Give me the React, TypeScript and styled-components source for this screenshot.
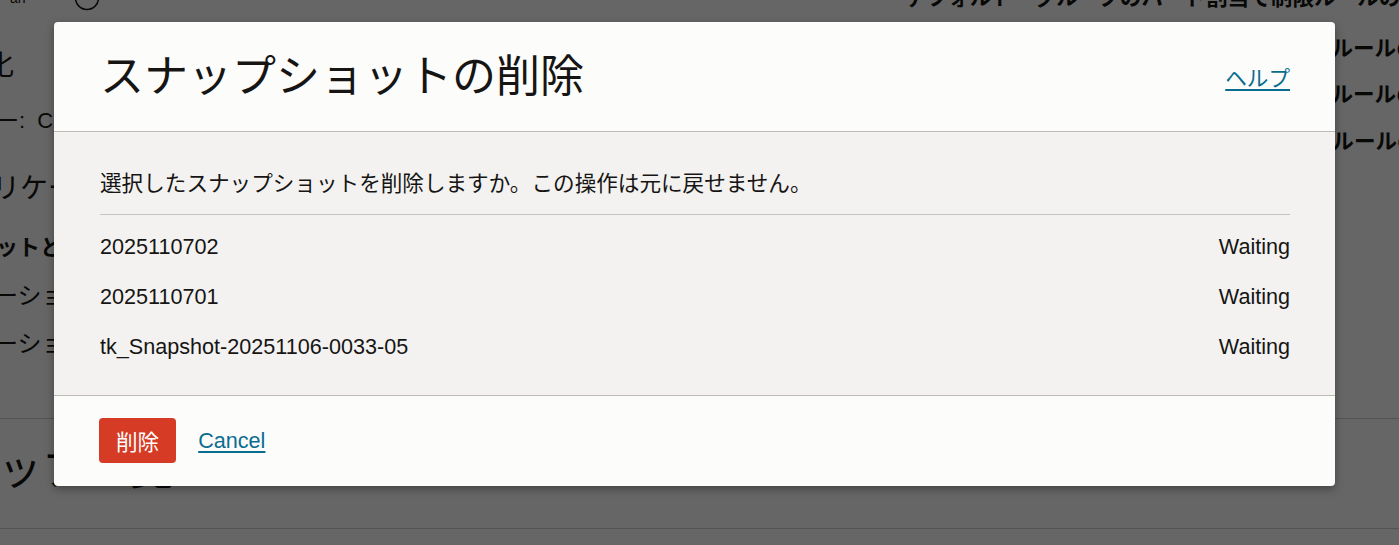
import React from 'react';
import styled, { createGlobalStyle } from 'styled-components';

const GlobalStyle = createGlobalStyle`
  html, body {
    margin: 0;
    padding: 0;
  }
  body {
    font-family: "Liberation Sans", "Noto Sans CJK JP", sans-serif;
    color: #161513;
    background: #ffffff;
  }
`;

const snapshots = [
  { name: '2025110702', status: 'Waiting' },
  { name: '2025110701', status: 'Waiting' },
  { name: 'tk_Snapshot-20251106-0033-05', status: 'Waiting' },
];

const rules = [
  'グループのハード割当て制限ルールの作成',
  'グループのソフト割当て制限ルールの作成',
  'ユーザーのハード割当て制限ルールの作成',
];

// ---- page behind the dialog ----

const Screen = styled.div`
  position: relative;
  width: 100%;
  height: 545px;
  overflow: hidden;
`;

const BgPage = styled.div`
  display: flex;
  height: 100%;
  white-space: nowrap;
`;

const BgLeft = styled.div`
  width: 700px;
  flex-shrink: 0;
  display: flex;
  flex-direction: column;
`;

const BgRight = styled.div`
  flex: 1;
  display: flex;
  flex-direction: column;
  padding-left: 205px;
  overflow: hidden;
`;

const TopBar = styled.div`
  display: flex;
  align-items: center;
  gap: 48px;
  height: 24px;
  margin-top: -14px;
  padding-left: 10px;
  font-size: 14px;
`;

const BgText = styled.div<{ $size: number; $bold?: boolean; $top: number; $shift?: number }>`
  font-family: "Liberation Sans", "Noto Sans CJK JP", sans-serif;
  font-size: ${(p) => p.$size}px;
  font-weight: ${(p) => (p.$bold ? 700 : 400)};
  line-height: 32px;
  margin-top: ${(p) => p.$top}px;
  margin-left: ${(p) => p.$shift ?? 0}px;
`;

const BgRule = styled.div<{ $top: number }>`
  height: 1px;
  background: #cfcfcf;
  margin-top: ${(p) => p.$top}px;
  width: 1399px;
`;

const RuleItem = styled.div<{ $first?: boolean }>`
  font-size: 21.6px;
  font-weight: 700;
  line-height: 30px;
  margin-top: ${(p) => (p.$first ? -17 : 16.5)}px;
  padding-left: ${(p) => (p.$first ? 0 : 147)}px;
  &:nth-child(2) {
    margin-top: 20.5px;
  }
`;

// ---- dialog ----

const Overlay = styled.div`
  position: absolute;
  inset: 0;
  background: rgba(0, 0, 0, 0.6);
  display: flex;
  align-items: flex-start;
  padding: 22px 64px 0 54px;
  box-sizing: border-box;
`;

const Dialog = styled.div`
  flex: 1;
  background: #fcfcfb;
  border-radius: 4px;
  box-shadow: 0 3px 8px rgba(0, 0, 0, 0.35);
  overflow: hidden;
`;

const Header = styled.div`
  display: flex;
  justify-content: space-between;
  align-items: center;
  height: 109px;
  padding: 0 45px 0 46px;
  border-bottom: 1px solid #bdb9b5;
`;

const Title = styled.h1`
  margin: 0;
  font-size: 44px;
  font-weight: 400;
  line-height: 1;
  color: #161513;
`;

const Link = styled.a`
  font-size: 21.6px;
  color: #0a6d8f;
  text-decoration: underline;
  text-decoration-thickness: 2px;
  text-underline-offset: 3px;
  cursor: pointer;
`;

const Body = styled.div`
  background: #f3f2f1;
  padding: 36px 45px 23px 46px;
  border-bottom: 1px solid #bdb9b5;
`;

const Prompt = styled.p`
  margin: 0;
  font-size: 21.6px;
  line-height: 32px;
  padding-bottom: 14px;
  border-bottom: 1px solid #c7c4c0;
`;

const List = styled.div`
  margin-top: 7px;
`;

const Row = styled.div`
  display: flex;
  justify-content: space-between;
  align-items: center;
  height: 50px;
  font-size: 21.6px;
`;

const Footer = styled.div`
  display: flex;
  align-items: center;
  gap: 22px;
  padding: 22px 45px 23px 45px;
`;

const DangerButton = styled.button`
  height: 45px;
  padding: 0 17px;
  border: none;
  border-radius: 4px;
  background: #d63b25;
  color: #ffffff;
  font-family: "Liberation Sans", "Noto Sans CJK JP", sans-serif;
  font-size: 21.6px;
  cursor: pointer;
`;

export default function App() {
  return (
    <Screen>
      <GlobalStyle />
      <BgPage>
        <BgLeft>
          <TopBar>
            <span>an</span>
            <svg width="26" height="26" viewBox="0 0 26 26">
              <circle cx="13" cy="13" r="11.5" fill="none" stroke="#161513" strokeWidth="1.5" />
            </svg>
          </TopBar>
          <BgText $size={28} $top={40} $shift={-14}>化</BgText>
          <BgText $size={22} $top={23} $shift={-3}>ー:{'\u00a0\u00a0'}C</BgText>
          <BgText $size={28} $top={36} $shift={-8}>リケーション</BgText>
          <BgText $size={22} $bold $top={27} $shift={-4}>ットとバージョン</BgText>
          <BgText $size={24} $top={16} $shift={-6}>ーション</BgText>
          <BgText $size={24} $top={16} $shift={-6}>ーション</BgText>
          <BgRule $top={58} />
          <BgText $size={44} $top={35} $shift={-90}>スナップ一覧</BgText>
          <BgRule $top={42} />
        </BgLeft>
        <BgRight>
          <RuleItem $first>デフォルト・グループのハード割当て制限ルールの作成</RuleItem>
          {rules.map((r) => (
            <RuleItem key={r}>{r}</RuleItem>
          ))}
        </BgRight>
      </BgPage>

      <Overlay>
        <Dialog role="dialog">
          <Header>
            <Title>スナップショットの削除</Title>
            <Link>ヘルプ</Link>
          </Header>
          <Body>
            <Prompt>選択したスナップショットを削除しますか。この操作は元に戻せません。</Prompt>
            <List>
              {snapshots.map((s) => (
                <Row key={s.name}>
                  <span>{s.name}</span>
                  <span>{s.status}</span>
                </Row>
              ))}
            </List>
          </Body>
          <Footer>
            <DangerButton>削除</DangerButton>
            <Link>Cancel</Link>
          </Footer>
        </Dialog>
      </Overlay>
    </Screen>
  );
}
